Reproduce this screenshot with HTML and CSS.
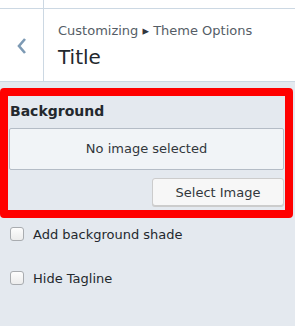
FILE: index.html
```html
<!DOCTYPE html>
<html>
<head>
<meta charset="utf-8">
<title>Customizing - Theme Options</title>
<link rel="stylesheet" href="styles.css">
</head>
<body>

<div class="header">
	<div class="back">
		<svg width="12" height="18" viewBox="0 0 12 18"><path d="M9 2 L3 9 L9 16" fill="none" stroke="#7d9ab4" stroke-width="2.6"/></svg>
	</div>
	<div class="titles">
		<div class="crumb">Customizing <span class="caret">&#9656;</span> Theme Options</div>
		<div class="title">Title</div>
	</div>
</div>

<div class="control highlight">
	<div class="label">Background</div>
	<div class="placeholder">No image selected</div>
	<div class="actions">
		<button class="btn">Select Image</button>
	</div>
</div>

<label class="check"><input type="checkbox"> Add background shade</label>
<label class="check"><input type="checkbox"> Hide Tagline</label>

</body>
</html>
```

FILE: styles.css
```css
body {
	margin: 0;
	background: #e4e9ef;
	font-family: "DejaVu Sans", sans-serif;
	font-size: 13px;
	color: #23282d;
}
.header {
	display: flex;
	height: 81px;
	border-bottom: 1px solid #ccd8e3;
	background: linear-gradient(#ccd8e3, #ccd8e3) 0 8px / 100% 1px no-repeat, #fff;
}
.back {
	width: 44px;
	border-right: 1px solid #ccd8e3;
	display: flex;
	align-items: center;
	justify-content: center;
	padding-top: 10px;
	box-sizing: border-box;
}
.titles {
	padding: 23px 0 0 14px;
}
.crumb {
	font-size: 13px;
	color: #555d66;
	line-height: 16px;
}
.caret {
	font-size: 13px;
	color: #32373c;
}
.title {
	font-size: 20px;
	line-height: 24px;
	margin-top: 6px;
	color: #23282d;
}
.control {
	width: 293px;
	box-sizing: border-box;
	margin-top: 6px;
	padding: 6px 1px 4px 1px;
}
.highlight {
	border: 8px solid #ff0000;
	border-radius: 4px;
}
.label {
	font-weight: bold;
	font-size: 14px;
	line-height: 18px;
	padding-left: 1px;
	margin-bottom: 8px;
}
.placeholder {
	height: 40px;
	background: #f1f4f7;
	border: 1px solid #b4bcc6;
	border-radius: 2px;
	text-align: center;
	line-height: 40px;
	color: #32373c;
	font-size: 13px;
}
.actions {
	display: flex;
	justify-content: flex-end;
	margin-top: 8px;
}
.btn {
	width: 132px;
	height: 28px;
	font-family: inherit;
	font-size: 13px;
	color: #32373c;
	background: #f7f7f7;
	border: 1px solid #cccccc;
	border-radius: 3px;
	box-shadow: 0 1px 0 #cccccc;
	padding: 0;
}
.check {
	display: flex;
	align-items: center;
	gap: 9px;
	padding-left: 10px;
	height: 16px;
	margin-top: 8px;
	margin-bottom: 28px;
	color: #23282d;
}
.check + .check {
	margin-top: 0;
}
.check input {
	appearance: none;
	margin: 0;
	width: 14px;
	height: 14px;
	border: 1px solid #a9acb0;
	border-radius: 3px;
	background: linear-gradient(#fdfdfd, #ececec);
}
```
